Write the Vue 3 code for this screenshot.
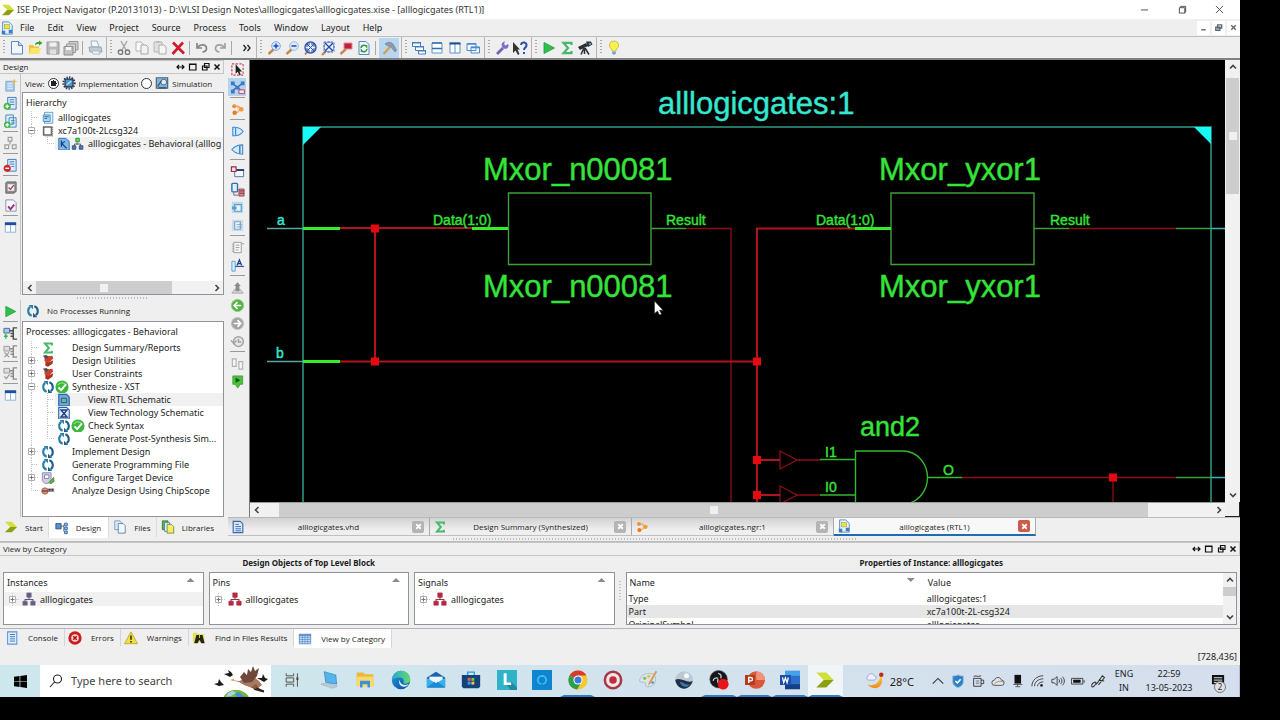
<script setup>
import { ref } from 'vue'

const view = ref('implementation')
const query = ref('')

const menus = ['File', 'Edit', 'View', 'Project', 'Source', 'Process', 'Tools', 'Window', 'Layout', 'Help']

const toolGroups = [
  ['new', 'open', 'save', 'saveall', '|', 'print'],
  ['cut', 'copy', 'paste', 'delete', '|', 'undo', 'redo', '|', 'more'],
  ['zoomin', 'zoomout', 'zoomfit', 'zoomsel', 'zoomred', 'refresh', '|', 'hammer'],
  ['cascade', 'tileh', 'tilev', 'windows'],
  ['wrench', 'whats'],
  ['play', 'sigma', 'scope'],
  ['bulb'],
]

const designTools = ['newsrc', 'addsrc', 'addcopy', '|', 'boxes', '|', 'removesrc', '|', 'chipcheck', 'pagecheck', '|', 'columns']
const processTools = ['play', '|', 'runproc', 'runprocx', '|', 'runprocv', '|', 'columns']
const schematicTools = [
  'select', 'nets', '|', 'orange', '|', 'gateR', 'gateL', '|', 'winred', 'chipred', 'bluein', 'blueout',
  '|', 'netlist', 'labelA', '|', 'up', 'back', 'forward', 'history', '|', 'pair', 'marker',
]

const hierarchy = [
  { line: ['tee'], icon: 'project', text: 'alllogicgates' },
  { line: ['minus'], icon: 'chip', text: 'xc7a100t-2Lcsg324' },
  { line: ['blank', 'elbow'], icon: 'vhd', extra: 'blocks', text: 'alllogicgates - Behavioral (alllog', sel: true },
]

const processes = [
  { line: ['tee'], icon: 'sigma', text: 'Design Summary/Reports' },
  { line: ['plus'], icon: 'tools', text: 'Design Utilities' },
  { line: ['plus'], icon: 'tools', text: 'User Constraints' },
  { line: ['minus'], icon: 'cycle', extra: 'ok', text: 'Synthesize - XST' },
  { line: ['bar', 'tee'], icon: 'rtl', text: 'View RTL Schematic', sel: true },
  { line: ['bar', 'tee'], icon: 'tech', text: 'View Technology Schematic' },
  { line: ['bar', 'tee'], icon: 'cycle', extra: 'ok', text: 'Check Syntax' },
  { line: ['bar', 'elbow'], icon: 'cycle', text: 'Generate Post-Synthesis Sim...' },
  { line: ['plus'], icon: 'cycle', text: 'Implement Design' },
  { line: ['tee'], icon: 'cycle', text: 'Generate Programming File' },
  { line: ['plus'], icon: 'config', text: 'Configure Target Device' },
  { line: ['elbow'], icon: 'chipscope', text: 'Analyze Design Using ChipScope' },
]

const dockTabs = [
  { icon: 'logo', text: 'Start' },
  { icon: 'design', text: 'Design', on: true },
  { icon: 'files', text: 'Files' },
  { icon: 'libs', text: 'Libraries' },
]

const docTabs = [
  { icon: 'doc', text: 'alllogicgates.vhd' },
  { icon: 'sigma', text: 'Design Summary (Synthesized)' },
  { icon: 'orange', text: 'alllogicgates.ngr:1' },
  { icon: 'rtldoc', text: 'alllogicgates (RTL1)', on: true },
]

const objectLists = [
  { title: 'Instances', icon: 'orgblue', sel: true },
  { title: 'Pins', icon: 'orgred' },
  { title: 'Signals', icon: 'orgred' },
]

const properties = [
  ['Type', 'alllogicgates:1'],
  ['Part', 'xc7a100t-2L-csg324'],
  ['OriginalSymbol', 'alllogicgates'],
]

const panelTabs = [
  { icon: 'console', text: 'Console' },
  { icon: 'error', text: 'Errors' },
  { icon: 'warning', text: 'Warnings' },
  { icon: 'find', text: 'Find in Files Results' },
  { icon: 'grid', text: 'View by Category', on: true },
]

const taskApps = [
  { n: 'taskview' }, { n: 'pc' }, { n: 'folder' }, { n: 'edge' }, { n: 'mail' }, { n: 'store' }, { n: 'appL' }, { n: 'appO' },
  { n: 'chrome', run: true }, { n: 'record' }, { n: 'paint' }, { n: 'globe' }, { n: 'obs', run: true },
  { n: 'ppt', run: true }, { n: 'word', run: true }, { n: 'logo', run: true, on: true },
]

const trayIcons = ['chevup', 'shield', 'cup', 'cloud', 'usb', 'wifi', 'volume', 'battery', 'pen']
</script>

<template>
  <svg class="sprite" aria-hidden="true">
    <defs>
      <linearGradient id="gEdge" x1="0" y1="0" x2="1" y2="1"><stop offset="0" stop-color="#1b9de2" /><stop offset="1" stop-color="#0c4a9a" /></linearGradient>
      <linearGradient id="gEdge2" x1="0" y1="0" x2="1" y2="0"><stop offset="0" stop-color="#2aa7d8" /><stop offset="1" stop-color="#5fdc6a" /></linearGradient>
      <linearGradient id="gMoon" x1="0" y1="0" x2="0" y2="1"><stop offset="0" stop-color="#ffc93a" /><stop offset="1" stop-color="#f08a1c" /></linearGradient>
    </defs>
    <symbol id="logo" viewBox="0 0 16 16"><path d="M1 2h8l6 6H7z" fill="#cfe03a" /><path d="M7 8h8l-6 6H1z" fill="#8f9f14" /></symbol>
    <symbol id="rtldoc" viewBox="0 0 16 16"><path d="M3 1h7l4 4v10H3z" fill="#e6f1fb" stroke="#4a86c0" /><rect x="5" y="4" width="6" height="5" fill="#f3e03c" stroke="#8aa04a" stroke-width=".6" /><path d="M2 11h4v4H2z M10 10h4v4h-4z" fill="#3c7ec4" /></symbol>
    <symbol id="new" viewBox="0 0 16 16"><path d="M2.500 1.500h7l4 4V14h-11z" fill="#f1f6ff" stroke="#5b86c9" /><path d="M9.500 1.500v4h4" fill="#bcd4f4" stroke="#5b86c9" /></symbol>
    <symbol id="open" viewBox="0 0 16 16"><path d="M2 5h4l1 1.500h5V14H2z" fill="#e9c33c" /><path d="M4 8h10l-2 6H2z" fill="#fbe36d" /><path d="M8 5c0-2.500 2-3 4-3V.5L15.500 3 12 5.500V4C10 4 9 4.500 8 5z" fill="#2ea52e" /></symbol>
    <symbol id="save" viewBox="0 0 16 16"><path d="M2 2h12v12H2z" fill="#b9b9b9" stroke="#999" /><path d="M4.500 2.500h7v4h-7z" fill="#f2f2f2" /><path d="M5 9.500h6V14H5z" fill="#dedede" /></symbol>
    <symbol id="saveall" viewBox="0 0 16 16"><path d="M6 1.500h9V10H6z" fill="#ccc" stroke="#999" /><path d="M3.500 4h9v8.500h-9z" fill="#d5d5d5" stroke="#999" /><path d="M1 6.500h9V15H1z" fill="#c2c2c2" stroke="#8d8d8d" /><path d="M3 7h5v3H3z" fill="#f4f4f4" /></symbol>
    <symbol id="print" viewBox="0 0 16 16"><path d="M4 1h6l2 6H5z" fill="#f5f7fa" stroke="#a5b2c0" /><path d="M2 7h12l1 5H3z" fill="#c3ccd6" stroke="#98a4b0" /><path d="M5 11h7l1 3H6z" fill="#eef" stroke="#a8b2bd" stroke-width=".8" /></symbol>
    <symbol id="cut" viewBox="0 0 16 16"><path d="M5 1l5 9M11 1l-5 9" stroke="#a8a8a8" stroke-width="1.500" /><circle cx="4.500" cy="12.200" r="2.200" fill="none" stroke="#777" stroke-width="1.300" /><circle cx="11.500" cy="12.200" r="2.200" fill="none" stroke="#777" stroke-width="1.300" /></symbol>
    <symbol id="copy" viewBox="0 0 16 16"><path d="M2 2h5l2 2v7H2z" fill="#fafafa" stroke="#b4b4b4" /><path d="M7 5h5l2 2v7H7z" fill="#f2f2f2" stroke="#a5a5a5" /></symbol>
    <symbol id="paste" viewBox="0 0 16 16"><path d="M2 2h8v10H2z" fill="#dfdfdf" stroke="#b8b8b8" /><path d="M4.500 1h3v2h-3z" fill="#bbb" /><path d="M7 5h5l2 2v7H7z" fill="#f6f6f6" stroke="#adadad" /></symbol>
    <symbol id="delete" viewBox="0 0 16 16"><path d="M3 2.500l11 11M13 2.500L2.500 14" stroke="#d3182c" stroke-width="2.600" /></symbol>
    <symbol id="undo" viewBox="0 0 16 16"><path d="M3 3v5h5M3.500 7.500C6 4 12 4 12.500 8c.2 2.500-1.500 4-4 4" fill="none" stroke="#858585" stroke-width="1.700" /></symbol>
    <symbol id="redo" viewBox="0 0 16 16"><path d="M13 3v5H8M12.500 7.500C10 4 4 4 3.500 8c-.2 2.500 1.500 4 4 4" fill="none" stroke="#a0a0a0" stroke-width="1.700" /></symbol>
    <symbol id="more" viewBox="0 0 16 16"><path d="M7.500 5l2.500 3-2.500 3M11.500 5l2.500 3-2.500 3" fill="none" stroke="#222" stroke-width="1.300" /></symbol>
    <symbol id="zoomin" viewBox="0 0 16 16"><path d="M8 9l-5.500 5" stroke="#c58a4a" stroke-width="2.400" /><circle cx="10" cy="6" r="4.300" fill="#dcecff" stroke="#7aa3dc" /><path d="M10 3.500v5M7.500 6h5" stroke="#1b49b8" stroke-width="1.500" /></symbol>
    <symbol id="zoomout" viewBox="0 0 16 16"><path d="M8 9l-5.500 5" stroke="#c58a4a" stroke-width="2.400" /><circle cx="10" cy="6" r="4.300" fill="#dcecff" stroke="#9ab9e4" /><path d="M7.500 6h5" stroke="#1b49b8" stroke-width="1.500" /></symbol>
    <symbol id="zoomfit" viewBox="0 0 16 16"><path d="M6 11l-3 3.500" stroke="#c58a4a" stroke-width="2" /><circle cx="8.500" cy="7.500" r="5.500" fill="#eaf2ff" stroke="#2c57b5" stroke-width="1.400" /><path d="M5.500 4.500l6 6M11.500 4.500l-6 6M5 7V4h3M9 11h3V8M9 4h3v3M5 8v3h3" fill="none" stroke="#2448a0" /></symbol>
    <symbol id="zoomsel" viewBox="0 0 16 16"><path d="M6 11l-4 4" stroke="#c58a4a" stroke-width="2.400" /><circle cx="9" cy="7" r="5" fill="#eaf2ff" stroke="#5a83cf" /><path d="M5 3l8 8M13 3l-8 8" stroke="#2448a0" stroke-width="1.300" /><path d="M4 2h10v10H4z" fill="none" stroke="#4a6fc0" stroke-dasharray="2 1.500" /></symbol>
    <symbol id="zoomred" viewBox="0 0 16 16"><path d="M8 9l-5.500 5" stroke="#c58a4a" stroke-width="2.400" /><path d="M6 3h8v6H6z" fill="#c0203c" stroke="#e08c98" /></symbol>
    <symbol id="refresh" viewBox="0 0 16 16"><path d="M3 1.500h7l3 3v10H3z" fill="#f3faff" stroke="#5b86c9" /><path d="M5 8c.3-3 4-3.500 5.500-1.500V5M11 9c-.3 3-4 3.500-5.500 1.500V12" fill="none" stroke="#2f9e3f" stroke-width="1.600" /></symbol>
    <symbol id="hammer" viewBox="0 0 16 16"><path d="M9 7l-6.500 7" stroke="#d9a04f" stroke-width="2.400" /><path d="M4 4c3-2.500 6-2 8 0l3.500 6-1.500 2-4-5-3-1z" fill="#8f99aa" stroke="#6d7787" stroke-width=".6" /></symbol>
    <symbol id="cascade" viewBox="0 0 16 16"><g fill="#fff" stroke="#3f7fbe"><path d="M1.500 2.500h8v4h-8zM4.500 6.500h8v4h-8zM7.500 10.500h7v3.500h-7z" /></g><path d="M1 2h9v1.500H1zM4 6h9v1.500H4zM7 10h8v1.500H7z" fill="#3f7fbe" /></symbol>
    <symbol id="tileh" viewBox="0 0 16 16"><path d="M3 3h10v10H3z" fill="#fff" stroke="#5a93c8" /><path d="M3 3h10M3 8.500h10" stroke="#2f6fae" stroke-width="1.600" /></symbol>
    <symbol id="tilev" viewBox="0 0 16 16"><path d="M3 3h10v10H3zM8 3v10" fill="#fff" stroke="#5a93c8" /><path d="M2.500 3.500h11" stroke="#1f4f94" stroke-width="2" /></symbol>
    <symbol id="windows" viewBox="0 0 16 16"><path d="M2 3.500h9v7H2zM6 7h8.500v6H6z" fill="#f4faff" stroke="#4a8ccc" /><path d="M2 4h9M6 7.500h8.500" stroke="#4a8ccc" stroke-width="1.500" /></symbol>
    <symbol id="wrench" viewBox="0 0 16 16"><path d="M3 14l6-6" stroke="#6d66b8" stroke-width="2.800" /><path d="M14 4l-2.500 1.500L10 4l1-2.500C8.500 1.500 7 4 8 6.500s4 3 5.500 1.500S14.500 5 14 4z" fill="#7a72c6" /></symbol>
    <symbol id="whats" viewBox="0 0 16 16"><path d="M1 2v11l2.500-2.500L6 15l1.500-1L5.500 9.500H8z" fill="#333" /><path d="M9 5c.5-4 6-3 5.500.5-.3 2-2.500 2-2.500 4.500M12 12v2" fill="none" stroke="#2d4fa8" stroke-width="2" /></symbol>
    <symbol id="play" viewBox="0 0 16 16"><path d="M3 2.500L13.500 8 3 13.500z" fill="#2fc04c" stroke="#1f9a38" stroke-width=".8" /></symbol>
    <symbol id="sigma" viewBox="0 0 16 16"><path d="M12.500 5V2.800H4.500L9 8l-4.500 5.200h8V11" fill="none" stroke="#46b96a" stroke-width="2.200" /></symbol>
    <symbol id="scope" viewBox="0 0 16 16"><path d="M1 7l8-4 2 3-8 4z M9 1.500l5 0 1.500 3L11 7z" fill="#2b2f38" /><path d="M7 8l-3 6.500M7.500 8v6M8 8l4 6.500" stroke="#2b2f38" stroke-width="1.500" /><circle cx="13" cy="4" r="1.300" fill="#5a95b8" /></symbol>
    <symbol id="bulb" viewBox="0 0 16 16"><path d="M8 1a4.300 4.300 0 0 1 2.500 8L10 11H6l-.5-2A4.300 4.300 0 0 1 8 1z" fill="#f8ee55" stroke="#c9bb35" stroke-width=".8" /><path d="M6 11.500h4v2L8 15l-2-1.500z" fill="#7ba8cc" /></symbol>
    <symbol id="newsrc" viewBox="0 0 16 16"><path d="M3 3.500h9V14H3z" fill="#a8ccec" stroke="#7fa9d2" /><path d="M5 6h5M5 8.500h5M5 11h5" stroke="#e8f3fc" /><path d="M12 .5l1 2.300 2.500.7-2.500 1-1 2.500-1-2.500-2-1 2-.7z" fill="#f2b84b" /></symbol>
    <symbol id="addsrc" viewBox="0 0 16 16"><path d="M5 1.500h9V14H5z" fill="#dcecfb" stroke="#3f7cb8" /><path d="M7 4h5M7 6.500h5M7 9h5" stroke="#3f7cb8" /><circle cx="4.500" cy="11" r="3.800" fill="#43b649" /><path d="M4.500 9v4M2.500 11h4" stroke="#fff" stroke-width="1.400" /></symbol>
    <symbol id="addcopy" viewBox="0 0 16 16"><path d="M3 1h8v10H3zM6.500 4H14v10H6.500z" fill="#dcecfb" stroke="#3f8cb8" /><path d="M8.500 7h4M8.500 9.500h4" stroke="#3f8cb8" /><circle cx="4.500" cy="11.500" r="3.500" fill="#43b649" /><path d="M4.500 9.500v4M2.500 11.500h4" stroke="#fff" stroke-width="1.300" /></symbol>
    <symbol id="boxes" viewBox="0 0 16 16"><path d="M5.500 1.500h4v4h-4zM2 9.500h4v4H2zM10 9.500h4v4h-4zM7.500 6v3" fill="#eee" stroke="#a0a0a0" stroke-width="1.300" /></symbol>
    <symbol id="removesrc" viewBox="0 0 16 16"><path d="M5 1.500h9V14H5z" fill="#dcecfb" stroke="#3f7cb8" /><path d="M7 4h5M7 6.500h5M9 9h3" stroke="#3f7cb8" /><circle cx="4.500" cy="11" r="3.800" fill="#d3252c" /><path d="M2.500 11h4" stroke="#fff" stroke-width="1.500" /></symbol>
    <symbol id="chipcheck" viewBox="0 0 16 16"><path d="M4 2h10v10l-2 2H3V3z" fill="#8c8c8c" stroke="#666" /><path d="M5 4.500h7v7H5z" fill="#f1f1f1" /><path d="M6 8l2 2 3.500-4.500" fill="none" stroke="#a4384a" stroke-width="1.400" /></symbol>
    <symbol id="pagecheck" viewBox="0 0 16 16"><path d="M3 2h8l3 3v9H3z" fill="#f6f6ff" stroke="#8a8fa8" /><path d="M5.500 9l2.500 3 4-5" fill="none" stroke="#9a2f7c" stroke-width="2" /></symbol>
    <symbol id="columns" viewBox="0 0 16 16"><path d="M2.500 3h11v10h-11zM8 5v8" fill="#fff" stroke="#8ab0da" /><path d="M2 2.500h12v3H2z" fill="#1d4d9e" /></symbol>
    <symbol id="runproc" viewBox="0 0 16 16"><path d="M1 2.500h6v5H1z" fill="#a8c8ea" stroke="#47688e" /><path d="M15 2h-4v12h4M7 5h4M11 8H8M11 11H8" fill="none" stroke="#4b4b4b" stroke-width="1.500" /><path d="M3 8.500v5M1 11h4" stroke="#37b34a" stroke-width="1.500" /></symbol>
    <symbol id="runprocx" viewBox="0 0 16 16"><path d="M1 2.500h6v5H1z" fill="#ddd" stroke="#999" /><path d="M15 2h-4v12h4M7 5h4M11 8H8M11 11H8" fill="none" stroke="#8c8c8c" stroke-width="1.500" /><path d="M1.500 9l5 5M6.500 9l-5 5" stroke="#999" stroke-width="1.300" /></symbol>
    <symbol id="runprocv" viewBox="0 0 16 16"><path d="M1 2.500h6v5H1z" fill="#ddd" stroke="#999" /><path d="M15 2h-4v12h4M7 5h4M11 8H8M11 11H8" fill="none" stroke="#8c8c8c" stroke-width="1.500" /><path d="M1.500 11l2 2.500L7 9" fill="none" stroke="#999" stroke-width="1.300" /></symbol>
    <symbol id="select" viewBox="0 0 16 16"><path d="M2 2h12v12H2z" fill="none" stroke="#d04a5c" stroke-width="1.300" stroke-dasharray="2.500 1.500" /><path d="M6 2.500v10l2.300-2L10 14l1.500-.8L10 10h3z" fill="#222" /></symbol>
    <symbol id="nets" viewBox="0 0 16 16"><path d="M3 4l10 8M13 4L3 11" stroke="#2c62ae" stroke-width="1.300" /><path d="M1 1.500h4v4H1zM11.500 1.500h4v4h-4zM6 6h4v4H6zM1 10.500h4v4H1z" fill="#3f78c4" /><path d="M9.500 10.500h6v4h-6z" fill="#f7dfe8" stroke="#c03c70" /></symbol>
    <symbol id="orange" viewBox="0 0 16 16"><path d="M5 4.500h3l3 2M5 11h3l3-3.500" fill="none" stroke="#eeb070" stroke-width="1.400" /><circle cx="4.500" cy="4.500" r="2.200" fill="#ee8e32" /><circle cx="5" cy="11.500" r="2.400" fill="#e87c20" /><circle cx="9" cy="5.500" r="1.500" fill="#f2b070" /><circle cx="12" cy="7.800" r="2.500" fill="#f09a44" /></symbol>
    <symbol id="gateR" viewBox="0 0 16 16"><path d="M3 3.500c6-.5 9 1.500 11 4.500-2 3-5 5-11 4.500z" fill="#d2ebfb" stroke="#3f8cd0" stroke-width="1.200" /><path d="M6 4v8" stroke="#3f8cd0" stroke-width="1.300" /></symbol>
    <symbol id="gateL" viewBox="0 0 16 16"><path d="M13.500 3c-6 0-9 2-11.500 5 2.500 3 5.500 5 11.500 5z" fill="#d2ebfb" stroke="#3f8cd0" stroke-width="1.200" /><path d="M10.500 4v8.500" stroke="#2c5fae" stroke-width="1.300" /></symbol>
    <symbol id="winred" viewBox="0 0 16 16"><path d="M5 6h9.500v7.500H5z" fill="#f4f9ff" stroke="#4a74a8" /><path d="M5 6.500h10" stroke="#1e3d7a" stroke-width="2" /><path d="M1.500 3h5v5h-5z" fill="#f3dde4" stroke="#a02848" stroke-width="1.200" /></symbol>
    <symbol id="chipred" viewBox="0 0 16 16"><rect x="2" y="1.500" width="6" height="9" rx="1" fill="#e1f0fc" stroke="#2f6cb4" stroke-width="1.500" /><path d="M9.500 7.500h5.500v7.500H9.500z" fill="#d88898" stroke="#9a4a58" /><path d="M10 9.500h5M10 12h5" stroke="#7a3040" /><path d="M4 11v3h5" fill="none" stroke="#666" /></symbol>
    <symbol id="bluein" viewBox="0 0 16 16"><path d="M2 2h12v12H2z" fill="#b5d9f0" /><path d="M5 5h7v7H5z" fill="#e7f4fc" stroke="#5d9bc9" stroke-width="1.300" /><path d="M2 7h5v3H2z" fill="#5d9bc9" /></symbol>
    <symbol id="blueout" viewBox="0 0 16 16"><path d="M2 2h12v12H2z" fill="#c6ddee" /><path d="M5 4h6v8H5z" fill="#eef6fc" stroke="#7da6c9" stroke-width="1.300" /><path d="M7 7h6M7 9.500h6" stroke="#7da6c9" /></symbol>
    <symbol id="netlist" viewBox="0 0 16 16"><path d="M4 2.500h8v11H4z" fill="#f7f7f7" stroke="#9a9a9a" /><path d="M2 4.500h2M2 7h2M2 9.500h2M2 12h2M12 4h3M6 5.500h4M6 8h4M6 10.500h3" stroke="#a0a0a0" /></symbol>
    <symbol id="labelA" viewBox="0 0 16 16"><path d="M2 3.500h3.500V14H2z" fill="#d7effc" stroke="#5e9fd0" /><path d="M5.500 9H15" stroke="#2b5ea6" stroke-width="1.300" /><path d="M7.500 8L10 2l2.500 6M8.500 6h3" fill="none" stroke="#23408a" stroke-width="1.400" /></symbol>
    <symbol id="up" viewBox="0 0 16 16"><path d="M2 14l3-4h6l3 4z" fill="#d5d5d5" stroke="#aaa" /><path d="M8 2.500l3.500 4H10V12H6V6.500H4.500z" fill="#8b8b8b" /></symbol>
    <symbol id="back" viewBox="0 0 16 16"><circle cx="8" cy="8" r="6.500" fill="#52b543" stroke="#8fc985" /><path d="M12 8H5M8 4.500L4.500 8 8 11.500" fill="none" stroke="#fff" stroke-width="1.800" /></symbol>
    <symbol id="forward" viewBox="0 0 16 16"><circle cx="8" cy="8" r="6.500" fill="#a3a3a3" stroke="#c2c2c2" /><path d="M4 8h7M8 4.500L11.500 8 8 11.500" fill="none" stroke="#fff" stroke-width="1.800" /></symbol>
    <symbol id="history" viewBox="0 0 16 16"><circle cx="9" cy="8" r="5.200" fill="#e6e6e6" stroke="#a5a5a5" stroke-width="1.600" /><path d="M9 5v3.500h3M1 7l3 3 3-3" fill="none" stroke="#a0a0a0" stroke-width="1.500" /></symbol>
    <symbol id="pair" viewBox="0 0 16 16"><path d="M2.500 3h4v8h-4zM9.500 6h4v8h-4z" fill="#f6f6f6" stroke="#b0b0b0" stroke-width="1.200" /></symbol>
    <symbol id="marker" viewBox="0 0 16 16"><path d="M3 2h10.500v9H11l-2.800 4-2.700-4H3z" fill="#4cc03c" stroke="#35982a" stroke-width=".8" /><path d="M6 4l5 2.700L6 9.300z" fill="#124c10" /></symbol>
    <symbol id="project" viewBox="0 0 16 16"><path d="M4 1.500h9.500V14H4z" fill="#e0f1fb" stroke="#5c9cc9" /><path d="M2.500 4.500h8V12h-8z" fill="#a9d5f0" stroke="#4f8fc2" /><path d="M4 6.500h5M4 8.500h3" stroke="#285f98" /></symbol>
    <symbol id="chip" viewBox="0 0 16 16"><path d="M3 3.500h9v9H3z" fill="#fff" stroke="#666" stroke-width="1.800" /><path d="M13 3v10.500H4" fill="none" stroke="#8a8a8a" stroke-width="1.800" stroke-dasharray="1.500 1" /></symbol>
    <symbol id="vhd" viewBox="0 0 16 16"><path d="M2 1.500h8L14 5v10H2z" fill="#7fb7e6" stroke="#2e6fae" /><path d="M5 4v7M5 8l4-3M6 8l5 5" stroke="#163f7c" stroke-width="1.400" /></symbol>
    <symbol id="blocks" viewBox="0 0 16 16"><path d="M7 6v3M4 10V8h7v2" fill="none" stroke="#555" /><path d="M5.500 1.500h4v4h-4z" fill="#5ed35e" stroke="#2b8c3a" /><path d="M1.500 10h4v4h-4zM9.500 10h4v4h-4z" fill="#4f78b4" stroke="#2b4c84" /></symbol>
    <symbol id="tools" viewBox="0 0 16 16"><path d="M4 3l9-1 1 3-4 4-3 2-3-3z" fill="#c8442f" /><path d="M2 2l4-1 3 2-3 3z" fill="#4e4e50" /><path d="M5 9l3 1 6-3-1 4-5 3.500-3-1z" fill="#a8321f" /></symbol>
    <symbol id="cycle" viewBox="0 0 16 16"><path d="M6.500 13.500C1.500 12 1.500 5 5 3.500" fill="none" stroke="#2b7fa8" stroke-width="2.400" /><path d="M3 1h5v5z" fill="#2b7fa8" /><path d="M9.500 2.500C14.500 4 14.500 11 11 12.500" fill="none" stroke="#1d5f8c" stroke-width="2.400" /><path d="M13 15H8v-5z" fill="#1d5f8c" /></symbol>
    <symbol id="ok" viewBox="0 0 16 16"><circle cx="8" cy="8" r="7.500" fill="#3bb83c" /><path d="M3 6a6 6 0 0 1 10 0" fill="none" stroke="#8fe07c" stroke-width="1.500" /><path d="M4 8.500l3 3L12.500 5" fill="none" stroke="#fff" stroke-width="2.200" /></symbol>
    <symbol id="rtl" viewBox="0 0 16 16"><path d="M2 1.500h9l3 3V15H2z" fill="#6fa8dc" stroke="#2e62a6" stroke-width="1.300" /><path d="M5 6h6v5H5z" fill="#76b48a" stroke="#28518a" /></symbol>
    <symbol id="tech" viewBox="0 0 16 16"><path d="M2 1.500h9l3 3V15H2z" fill="#dfeefb" stroke="#2e62a6" stroke-width="1.300" /><path d="M4.500 4.500h7L8 8.500l3.500 4h-7L8 8.500z" fill="none" stroke="#1d3f84" stroke-width="1.600" /></symbol>
    <symbol id="config" viewBox="0 0 16 16"><path d="M1.500 2h10v8l-3 4H4l-2.500-3z" fill="#cfcde4" stroke="#8b88a8" /><path d="M4 4.500h5v4H4z" fill="#fff" stroke="#7a7aa0" /><path d="M9 13l5.500-6 .5 5-4 3z" fill="#5fae4a" stroke="#3c7c30" stroke-width=".7" /></symbol>
    <symbol id="chipscope" viewBox="0 0 16 16"><circle cx="4.500" cy="8" r="3.600" fill="#dd8f78" stroke="#a05a48" /><path d="M1 8h14M8 6h7M10 5v3M13 5v3" stroke="#4a3030" stroke-width="1.200" /></symbol>
    <symbol id="design" viewBox="0 0 16 16"><path d="M1 3h6v6H1z" fill="#5a8fd0" stroke="#28528e" /><path d="M7 6h3M10 4v8" stroke="#666" /><path d="M11 2.500h3v3h-3zM11 7h3v3h-3zM11 11.500h3v3h-3z" fill="#9cc4ec" stroke="#2e5c98" /></symbol>
    <symbol id="files" viewBox="0 0 16 16"><path d="M2 1h6l2 2v8H2z" fill="#dbe9fa" stroke="#7a95bc" /><path d="M6 4h5.500L14 6.500V15H6z" fill="#f2f8ff" stroke="#5c7fb0" /></symbol>
    <symbol id="libs" viewBox="0 0 16 16"><path d="M1.500 1H8v10H1.500z" fill="#55b84e" stroke="#2f7c30" /><path d="M4 3h6v10H4z" fill="#dbe9fa" stroke="#5c7fb0" /><path d="M7 5h5l2.500 2.500V15H7z" fill="#f5ee64" stroke="#6c8f50" /></symbol>
    <symbol id="doc" viewBox="0 0 16 16"><path d="M2.500 1.500h8l3 3v10h-11z" fill="#d9e8fb" stroke="#3767b0" stroke-width="1.300" /><path d="M5 5h4M5 7.500h6.500M5 10h6.500M5 12.300h6.500" stroke="#3767b0" /></symbol>
    <symbol id="orgblue" viewBox="0 0 16 16"><path d="M8 5v4M3.500 11V8.500h9V11" fill="none" stroke="#5a5c78" stroke-width="1.200" /><path d="M5.500 1h5v5h-5zM1 10.500h5v4.500H1zM10 10.500h5v4.500h-5z" fill="#565f94" stroke="#8f6a7c" stroke-width=".8" /></symbol>
    <symbol id="orgred" viewBox="0 0 16 16"><path d="M8 5v4M3.500 11V8.500h9V11" fill="none" stroke="#8a3a48" stroke-width="1.200" /><path d="M5.500 1h5v5h-5zM1 10.500h5v4.500H1zM10 10.500h5v4.500h-5z" fill="#c82238" stroke="#98304a" stroke-width=".8" /></symbol>
    <symbol id="console" viewBox="0 0 16 16"><path d="M3 1h10.500v14H3z" fill="#e3f0fd" stroke="#5d93d0" stroke-width="1.200" /><path d="M5.500 4h6M5.500 6.500h6M5.500 9h6M5.500 11.500h6" stroke="#2f6ab8" /></symbol>
    <symbol id="error" viewBox="0 0 16 16"><circle cx="8" cy="8" r="7.600" fill="#cc1c1c" /><circle cx="8" cy="8" r="4.300" fill="#f4d8d8" /><path d="M6 6l4 4M10 6l-4 4" stroke="#b01010" stroke-width="1.800" /></symbol>
    <symbol id="warning" viewBox="0 0 16 16"><path d="M8 1l7.500 13.500H.5z" fill="#f4e03a" stroke="#a89a20" stroke-width=".8" /><path d="M8 5v5M8 11.500v1.700" stroke="#222" stroke-width="1.700" /></symbol>
    <symbol id="find" viewBox="0 0 16 16"><path d="M1 2h5l1 1.500h7V13H1z" fill="#e8e25a" /><path d="M5 4.500h3V8h1V4.500h3l2.500 9.500h-4L9 10.500H8L6.500 14h-4z" fill="#262618" /></symbol>
    <symbol id="grid" viewBox="0 0 16 16"><path d="M1.500 2.500h13v11h-13z" fill="#cfe2f7" stroke="#5f8fcc" /><path d="M1.500 6h13M1.500 8.500h13M1.500 11h13M5 3v10.500M8 3v10.500M11.200 3v10.500" stroke="#5f8fcc" stroke-width=".9" /><path d="M1 2.500h14v2H1z" fill="#5f8fcc" /></symbol>
    <symbol id="impl" viewBox="0 0 16 16"><circle cx="8" cy="8" r="6.300" fill="none" stroke="#27374d" stroke-width="2.600" stroke-dasharray="1.500 1.400" /><path d="M3.500 3.500h9v9h-9z" fill="#4f95cf" stroke="#27374d" stroke-width="1.300" /><path d="M5.500 10l5-4" stroke="#c5e3f7" stroke-width="1.500" /></symbol>
    <symbol id="simu" viewBox="0 0 16 16"><path d="M1.500 2h13v12h-13z" fill="#7eb4e0" stroke="#4d5f74" stroke-width="1.300" /><circle cx="10" cy="7" r="3.300" fill="#dcecf8" stroke="#44586e" /><path d="M3 12l4-6M4 13.500h9" stroke="#35485e" stroke-width="1.300" /></symbol>

    <symbol id="c-tee" viewBox="0 0 16 13"><path d="M8.500 0v13M9 6.500h6" fill="none" stroke="#c4c4c4" stroke-dasharray="1 1" /></symbol>
    <symbol id="c-elbow" viewBox="0 0 16 13"><path d="M8.500 0v6.500h7" fill="none" stroke="#c4c4c4" stroke-dasharray="1 1" /></symbol>
    <symbol id="c-bar" viewBox="0 0 16 13"><path d="M8.500 0v13" stroke="#c4c4c4" stroke-dasharray="1 1" /></symbol>
    <symbol id="c-blank" viewBox="0 0 16 13" />
    <symbol id="c-plus" viewBox="0 0 16 13"><path d="M8.500 0v13M12 6.500h4" stroke="#c4c4c4" stroke-dasharray="1 1" /><path d="M5.500 3.500h6v6h-6z" fill="#fff" stroke="#b0b0b0" /><path d="M6.500 6.500h4M8.500 4.500v4" stroke="#777" /></symbol>
    <symbol id="c-minus" viewBox="0 0 16 13"><path d="M8.500 0v13M12 6.500h4" stroke="#c4c4c4" stroke-dasharray="1 1" /><path d="M5.500 3.500h6v6h-6z" fill="#fff" stroke="#b0b0b0" /><path d="M6.500 6.500h4" stroke="#777" /></symbol>

    <symbol id="w-dock" viewBox="0 0 48 12"><g fill="none" stroke="#111" stroke-width="1.200"><path d="M2 6h7M4 4L2 6l2 2M7 4l2 2-2 2" /><path d="M14.500 3h6.500v6h-6.500zM14.500 3.500h6.500" /><path d="M29.500 2.500h4.500v4h-4.500zM27.500 5h4.500v4h-4.500z" fill="#efefef" /><path d="M39.500 3.500l5 5M44.500 3.500l-5 5" stroke-width="1.500" /></g></symbol>

    <symbol id="taskview" viewBox="0 0 24 24"><g fill="none" stroke="#555" stroke-width="1.200"><path d="M5 4v3h9V4M5 20v-3h9v3M5 9.500h9v5H5z" /><path d="M18.500 4v16" /></g><path d="M17.300 9h2.400v3h-2.400z" fill="#444" /></symbol>
    <symbol id="pc" viewBox="0 0 24 24"><path d="M5 2l14 4 1 11-13-2z" fill="#55b4ea" stroke="#2e80c0" stroke-width=".8" /><path d="M1 17l6-1.500 14 4-6 2.500z" fill="#b9cbd8" stroke="#93a9ba" stroke-width=".6" /></symbol>
    <symbol id="folder" viewBox="0 0 24 24"><path d="M2 3h8l2 2h10v14H2z" fill="#e9b93a" /><path d="M2 8h20v12H2z" fill="#fbd86b" /><path d="M6 13h12v8h-3v-4H9v4H6z" fill="#3d8fd8" /></symbol>
    <symbol id="edge" viewBox="0 0 24 24"><circle cx="12" cy="12" r="11" fill="url(#gEdge)" /><path d="M1 12C2 5 7 1 12 1s11 4 11 10c0 4-3 5.500-6 5.500-2 0-2.500-1-2-2 1-2-.5-5.500-4.500-5.500C6.500 9 3 10.500 1 12z" fill="url(#gEdge2)" /><path d="M10.500 11.500c-.5 4.500 4 7.500 9 6l2-1c-1.500 3-4.500 4-7 3.500-4-.5-6-5-4-8.500z" fill="#d8eef4" /></symbol>
    <symbol id="mail" viewBox="0 0 24 24"><path d="M1 9l11-7 11 7v12H1z" fill="#1b64b4" /><path d="M4 8h16v8H4z" fill="#eef6fd" /><path d="M1 9.500l11 6.500 11-6.500V21H1z" fill="#37b3ec" /><path d="M1 21l9-7 2 2 2-2 9 7z" fill="#1f8ad4" /></symbol>
    <symbol id="store" viewBox="0 0 24 24"><path d="M8 6V2.500h8V6" fill="none" stroke="#2a9ed8" stroke-width="1.600" /><path d="M1 6h22v14l-2 2H3l-2-2z" fill="#15427a" /><path d="M8 9.500h3.500V13H8z" fill="#f2603c" /><path d="M12.500 9.500H16V13h-3.500z" fill="#7fc24a" /><path d="M8 14h3.500v3.500H8z" fill="#36a3e8" /><path d="M12.500 14H16v3.500h-3.500z" fill="#f8c43c" /></symbol>
    <symbol id="appL" viewBox="0 0 24 24"><path d="M0 0h24v24H0z" fill="#2fb3c8" /><path d="M12 18l5-4 7 7v3H16z" fill="#1f8b9f" /><path d="M8 4h3.500v11H17v3H8z" fill="#fff" /></symbol>
    <symbol id="appO" viewBox="0 0 24 24"><path d="M0 0h24v24H0z" fill="#1184cf" /><circle cx="12" cy="12" r="5" fill="none" stroke="#37c6f4" stroke-width="2" /><path d="M11 16h2v2h-2z" fill="#1184cf" /></symbol>
    <symbol id="chrome" viewBox="0 0 24 24"><circle cx="12" cy="12" r="11.500" fill="#f7c92c" /><path d="M12 12L2 6.200A11.500 11.500 0 0 1 22 6.500H12z" fill="#d93a2e" /><path d="M12 12L2 6.200A11.500 11.500 0 0 0 11 23.500l5-9z" fill="#2f9e4c" /><circle cx="12" cy="12" r="5.500" fill="#fff" /><circle cx="12" cy="12" r="4.200" fill="#3a78e0" /></symbol>
    <symbol id="record" viewBox="0 0 24 24"><circle cx="12" cy="12" r="9.800" fill="#f3e6e8" stroke="#a83848" stroke-width="3" /><circle cx="12" cy="12" r="4.500" fill="#c02c3c" /></symbol>
    <symbol id="paint" viewBox="0 0 24 24"><path d="M2 13C2 7 8 4 14 4c5 0 8 4 7 9-1 6-8 8-11 7-2-1 0-4-2-5s-6 1-6-2z" fill="#d8e4ea" stroke="#9aaebc" stroke-width=".8" /><circle cx="8" cy="10" r="1.800" fill="#7db84c" /><circle cx="13" cy="7.500" r="1.800" fill="#e8bf3c" /><circle cx="17.500" cy="15" r="1.600" fill="#4c94d0" /><path d="M21 1l2 1-8 14-3 3 1-4z" fill="#d89a50" /></symbol>
    <symbol id="globe" viewBox="0 0 24 24"><circle cx="12" cy="12" r="10.500" fill="#bcc9d4" /><path d="M1.500 12c6-4 15 5 21 1-1 5-5.500 9.500-10.500 9.500S2.500 18 1.500 12z" fill="#1f2f44" /><path d="M7 14c4 0 7 5 12 3l-3 3c-4 1-8-2-9-6z" fill="#3a78b0" /><circle cx="15" cy="7" r="3" fill="#f4f8fb" /></symbol>
    <symbol id="obs" viewBox="0 0 24 24"><circle cx="11.500" cy="11" r="10.500" fill="#15151a" stroke="#555" stroke-width=".8" /><path d="M11 4a4 4 0 0 1 3 6M5 13a4 4 0 0 1 6-3M14 17a4 4 0 0 1-3-6" fill="none" stroke="#cfcfd4" stroke-width="1.600" /><circle cx="17" cy="17" r="6.500" fill="#e8141c" /></symbol>
    <symbol id="ppt" viewBox="0 0 24 24"><circle cx="13.500" cy="12" r="10.500" fill="#d9583a" /><path d="M13.500 1.500A10.500 10.500 0 0 1 24 12H13.500z" fill="#f09478" /><path d="M0 6h12v12H0z" fill="#b83a1e" /><path d="M4.500 15.500V9H7a1.900 1.900 0 0 1 0 4H4.500" fill="none" stroke="#fff" stroke-width="1.700" /></symbol>
    <symbol id="word" viewBox="0 0 24 24"><path d="M6 1h18v22H6z" fill="#2b6fc8" /><path d="M6 1h18v6H6z" fill="#46a0ec" /><path d="M6 17h18v6H6z" fill="#153f88" /><path d="M0 6h13v12H0z" fill="#1b4fa4" /><path d="M3 9l1.500 6 2-5.500 2 5.500L10 9" fill="none" stroke="#fff" stroke-width="1.500" /></symbol>

    <symbol id="chevup" viewBox="0 0 16 16"><path d="M2 11l6-6 6 6" fill="none" stroke="#333" stroke-width="1.200" /></symbol>
    <symbol id="shield" viewBox="0 0 16 16"><path d="M8 1c2 1 4 1.300 6 1.300V9c0 3-3 5.500-6 6.500-3-1-6-3.500-6-6.500V2.300C4 2.300 6 2 8 1z" fill="#2f7fc4" stroke="#8fb8dc" /><path d="M5 8l2.300 2.300L11 6" fill="none" stroke="#fff" stroke-width="1.700" /></symbol>
    <symbol id="cup" viewBox="0 0 16 16"><path d="M3 5h8.500v9H3zM11.500 7h3v4h-3M3 3c2-2 5 1 8.500-1" fill="none" stroke="#333" /><path d="M5.500 8h4M5.500 10.500h4" stroke="#666" /></symbol>
    <symbol id="cloud" viewBox="0 0 16 16"><path d="M4 13a3 3 0 0 1 0-6c1-4 7-4 8 0a3 3 0 0 1 0 6z" fill="#e4e4e4" stroke="#4a4a4a" /><path d="M3.500 12c2-3 7-5 11-2.500" fill="none" stroke="#888" /></symbol>
    <symbol id="usb" viewBox="0 0 16 16"><path d="M4 1h7.500v10H4z" fill="#111" /><path d="M2.500 12h10.500M7.500 10.500V14.500M5 14.500h5.500" stroke="#555" /></symbol>
    <symbol id="wifi" viewBox="0 0 16 16"><g fill="none" stroke="#444" stroke-width="1.100"><path d="M1 14C1 7 7 2 14 2M4 14c0-4.500 4-8.500 10-8.500M7.500 14c0-2.500 2.500-5 6.500-5" /></g><circle cx="12" cy="13" r="1.500" fill="#222" /></symbol>
    <symbol id="volume" viewBox="0 0 16 16"><path d="M1 6h2.500L7 3v10l-3.500-3H1zM9 6c1 1 1 3 0 4M11 4.500c2 2 2 5 0 7M13 3c3 3 3 7 0 10" fill="none" stroke="#333" /></symbol>
    <symbol id="battery" viewBox="0 0 16 16"><path d="M.5 5h13v6.500H.5zM15 7v3" fill="none" stroke="#333" /><path d="M2.500 6.500h8.500v3.500H2.500z" fill="#111" /></symbol>
    <symbol id="pen" viewBox="0 0 16 16"><path d="M1 13.500c-1-3.500 6-6 4.500-2.500s-5 5-4.500 2.500M6 12l7-10 2.500 2L8.500 12.500M9 7l6 1" fill="none" stroke="#333" stroke-width="1.200" /></symbol>
  </svg>

  <div class="stage">
    <div class="app">
      <header class="titlebar">
        <svg class="i14"><use href="#logo" /></svg>
        <h1>ISE Project Navigator (P.20131013) - D:\VLSI Design Notes\alllogicgates\alllogicgates.xise - [alllogicgates (RTL1)]</h1>
        <div class="winbtns">
          <button aria-label="Minimize"><svg viewBox="0 0 10 10"><path d="M1 5.500h8" /></svg></button>
          <button aria-label="Restore"><svg viewBox="0 0 10 10"><path d="M1.500 3h6v6h-6zM3 3V1.500h5.500V8H7.500" /></svg></button>
          <button aria-label="Close"><svg viewBox="0 0 10 10"><path d="M1 1l8 8M9 1L1 9" /></svg></button>
        </div>
      </header>

      <nav class="menubar">
        <svg class="i14"><use href="#rtldoc" /></svg>
        <button v-for="m in menus" :key="m">{{ m }}</button>
        <div class="mdibtns">
          <button aria-label="Minimize document"><svg viewBox="0 0 10 10"><path d="M2.500 7.500h5" /></svg></button>
          <button aria-label="Restore document"><svg viewBox="0 0 10 10"><path d="M4 2h4.500v3.500H4zM2 4.500h4.500V8H2z" /></svg></button>
          <button aria-label="Close document"><svg viewBox="0 0 10 10"><path d="M2.500 2.500l5 5M7.500 2.500l-5 5" /></svg></button>
        </div>
      </nav>

      <div class="toolbar">
        <div v-for="(g, gi) in toolGroups" :key="gi" class="tgroup">
          <span class="grip"></span>
          <template v-for="(t, i) in g" :key="i">
            <span v-if="t === '|'" class="vsep"></span>
            <button v-else :class="['tb', { pressed: t === 'hammer' }]" :aria-label="t"><svg class="i16"><use :href="'#' + t" /></svg></button>
          </template>
        </div>
      </div>

      <main class="main">
        <aside class="dock">
          <div class="dtitle"><span>Design</span><svg class="wdock"><use href="#w-dock" /></svg></div>

          <section class="pane hier">
            <div class="side">
              <template v-for="(t, i) in designTools" :key="i">
                <span v-if="t === '|'" class="hsep"></span>
                <button v-else class="sb" :aria-label="t"><svg class="i15"><use :href="'#' + t" /></svg></button>
              </template>
            </div>
            <div class="pbody">
              <div class="viewrow">
                <span class="vlabel">View:</span>
                <label><input v-model="view" type="radio" name="view" value="implementation" /><svg class="i14"><use href="#impl" /></svg><span>Implementation</span></label>
                <label><input v-model="view" type="radio" name="view" value="simulation" /><svg class="i14"><use href="#simu" /></svg><span>Simulation</span></label>
              </div>
              <div class="box">
                <div class="boxtitle">Hierarchy</div>
                <ul class="tree">
                  <li v-for="r in hierarchy" :key="r.text">
                    <svg v-for="(c, ci) in r.line" :key="ci" class="conn"><use :href="'#c-' + c" /></svg>
                    <span class="row" :class="{ sel: r.sel }">
                      <svg class="ticon"><use :href="'#' + r.icon" /></svg>
                      <svg v-if="r.extra" class="texra"><use :href="'#' + r.extra" /></svg>
                      <span class="rtext">{{ r.text }}</span>
                    </span>
                  </li>
                </ul>
                <div class="hscroll">
                  <button class="sarrow" aria-label="Scroll left"><svg viewBox="0 0 8 8"><path d="M5.500 1L2.500 4l3 3" /></svg></button>
                  <div class="track"><div class="thumb dockthumb"><i></i></div></div>
                  <button class="sarrow" aria-label="Scroll right"><svg viewBox="0 0 8 8"><path d="M2.500 1l3 3-3 3" /></svg></button>
                </div>
              </div>
            </div>
          </section>
          <div class="hsplit"></div>

          <section class="pane procs">
            <div class="side">
              <template v-for="(t, i) in processTools" :key="i">
                <span v-if="t === '|'" class="hsep"></span>
                <button v-else class="sb" :aria-label="t"><svg class="i15"><use :href="'#' + t" /></svg></button>
              </template>
            </div>
            <div class="pbody">
              <div class="running"><svg class="i14"><use href="#cycle" /></svg><span>No Processes Running</span></div>
              <div class="box">
                <div class="boxtitle">Processes: alllogicgates - Behavioral</div>
                <ul class="tree wide">
                  <li v-for="r in processes" :key="r.text">
                    <svg v-for="(c, ci) in r.line" :key="ci" class="conn"><use :href="'#c-' + c" /></svg>
                    <span class="row" :class="{ sel: r.sel }">
                      <svg class="ticon"><use :href="'#' + r.icon" /></svg>
                      <span class="slot"><svg v-if="r.extra" class="texra"><use :href="'#' + r.extra" /></svg></span>
                      <span class="rtext">{{ r.text }}</span>
                    </span>
                  </li>
                </ul>
              </div>
            </div>
          </section>

          <div class="tabs docktabs" role="tablist">
            <button v-for="t in dockTabs" :key="t.text" role="tab" :class="{ on: t.on }"><svg class="i14"><use :href="'#' + t.icon" /></svg>{{ t.text }}</button>
          </div>
        </aside>

        <section class="work">
          <div class="workrow">
            <div class="strip">
              <template v-for="(t, i) in schematicTools" :key="i">
                <span v-if="t === '|'" class="hsep"></span>
                <button v-else :class="['sb', { pressed: t === 'nets' }]" :aria-label="t"><svg class="i15"><use :href="'#' + t" /></svg></button>
              </template>
            </div>
            <div class="canvaswrap">
              <div class="canvas">
                <svg viewBox="250 60 975 442" preserveAspectRatio="xMinYMin slice">
                  <g fill="none" stroke="#2f9c86" stroke-width="1.500">
                    <path d="M303 520V127H1211V520" />
                    <path d="M267 228.500h36M267 361.500h36" stroke="#5aa59c" />
                    <path d="M1211 228.500h14M1211 477.500h14" stroke="#39b8b4" />
                  </g>
                  <path d="M303 127h18l-18 18zM1211 127h-17l17 17z" fill="#16fbf6" />
                  <g fill="none" stroke="#8c0f16" stroke-width="1.300">
                    <path d="M686 228.500h45V520M1069 228.500h107M962 477.500h214M1113 477V520M797 460h23M797 495h23" />
                    <path d="M780 451v18l17-9zM780 486v18l17-9z" />
                  </g>
                  <g fill="none" stroke="#b0141c" stroke-width="2">
                    <path d="M340 228h132M340 361.500h417M375 228v133M757 520V228.500h98M757 460h23M757 495h23" />
                  </g>
                  <path d="M371 224.500h8v8h-8zM371 357.500h8v8h-8zM753 357.500h8v8h-8zM753 456h8v8h-8zM753 491h8v8h-8zM1109 473.500h8v8h-8z" fill="#e60a10" />
                  <g fill="none" stroke="#3f9e37" stroke-width="1.400">
                    <path d="M508.500 193h142.500v71.500H508.500zM891 193h143v71.500H891z" />
                    <path d="M651 228.500h35M1034 228.500h35M1176 228.500h35M1176 477.500h35" />
                    <path d="M855.500 520V451H903a24.500 26.500 0 0 1 0 53H855M927 477.500h35M820 459.500h35M820 495h35" stroke="#35b82f" />
                  </g>
                  <path d="M303 228.500h37M303 361.500h37M472 228.500h36M855 228.500h36" stroke="#35ee28" stroke-width="3" />
                  <g fill="#35e33a" stroke="#35e33a" stroke-width=".4" font-family="'Liberation Sans', Arial, sans-serif">
                    <g fill="#35e8d2" stroke="#35e8d2">
                      <text x="658" y="114" font-size="31">alllogicgates:1</text>
                      <g font-size="14"><text x="277" y="225">a</text><text x="276" y="358">b</text></g>
                    </g>
                    <g font-size="31">
                      <text x="483" y="180">Mxor_n00081</text><text x="483" y="297">Mxor_n00081</text>
                      <text x="879" y="180">Mxor_yxor1</text><text x="879" y="297">Mxor_yxor1</text>
                    </g>
                    <text x="860" y="436" font-size="27">and2</text>
                    <g font-size="14">
                      <text x="433" y="225">Data(1:0)</text><text x="816" y="225">Data(1:0)</text>
                      <text x="666" y="225">Result</text><text x="1050" y="225">Result</text>
                      <text x="825" y="457">I1</text><text x="825" y="492">I0</text><text x="943" y="475">O</text>
                    </g>
                  </g>
                  <path d="M654.500 301v12.500l3-2.500 2 4 2-1-2-3.800h3.500z" fill="#fff" stroke="#222" stroke-width=".5" />
                </svg>
              </div>
              <div class="vscroll">
                <button class="sarrow" aria-label="Scroll up"><svg viewBox="0 0 8 8"><path d="M1 5.500l3-3 3 3" /></svg></button>
                <div class="track"><div class="thumb"><i></i></div></div>
                <button class="sarrow" aria-label="Scroll down"><svg viewBox="0 0 8 8"><path d="M1 2.500l3 3 3-3" /></svg></button>
              </div>
              <div class="hscroll big">
                <button class="sarrow" aria-label="Scroll left"><svg viewBox="0 0 8 8"><path d="M5.500 1L2.500 4l3 3" /></svg></button>
                <div class="track"><div class="thumb"><i></i></div></div>
                <button class="sarrow" aria-label="Scroll right"><svg viewBox="0 0 8 8"><path d="M2.500 1l3 3-3 3" /></svg></button>
              </div>
              <div class="corner"></div>
            </div>
          </div>
          <div class="doctabs" role="tablist">
            <div v-for="t in docTabs" :key="t.text" :class="['doctab', { on: t.on }]">
              <svg class="i14"><use :href="'#' + t.icon" /></svg>
              <button role="tab" class="dname">{{ t.text }}</button>
              <button class="dclose" :aria-label="'Close ' + t.text"><svg viewBox="0 0 10 10"><path d="M2.500 2.500l5 5M7.500 2.500l-5 5" /></svg></button>
            </div>
          </div>
          <div class="hsplit"></div>
        </section>
      </main>

      <section class="bottom">
        <div class="dtitle"><span>View by Category</span><svg class="wdock"><use href="#w-dock" /></svg></div>
        <div class="cats">
          <div class="catleft">
            <h2>Design Objects of Top Level Block</h2>
            <div class="lists">
              <div v-for="l in objectLists" :key="l.title" class="olist">
                <div class="ohead"><span>{{ l.title }}</span><i class="tri up"></i></div>
                <div class="orow" :class="{ sel: l.sel }">
                  <svg class="conn"><use href="#c-plus" /></svg>
                  <svg class="i14"><use :href="'#' + l.icon" /></svg>
                  <span>alllogicgates</span>
                </div>
              </div>
            </div>
          </div>
          <div class="vsplit"></div>
          <div class="catright">
            <h2>Properties of Instance: alllogicgates</h2>
            <div class="props">
              <div class="ptable">
                <table>
                  <thead><tr><th>Name<i class="tri"></i></th><th>Value</th></tr></thead>
                  <tbody><tr v-for="p in properties" :key="p[0]"><td>{{ p[0] }}</td><td>{{ p[1] }}</td></tr></tbody>
                </table>
              </div>
              <div class="vscroll small">
                <button class="sarrow" aria-label="Scroll up"><svg viewBox="0 0 8 8"><path d="M1 5.500l3-3 3 3" /></svg></button>
                <div class="track"><div class="thumb"></div></div>
                <button class="sarrow" aria-label="Scroll down"><svg viewBox="0 0 8 8"><path d="M1 2.500l3 3 3-3" /></svg></button>
              </div>
            </div>
          </div>
        </div>
        <div class="tabs paneltabs" role="tablist">
          <button v-for="t in panelTabs" :key="t.text" role="tab" :class="{ on: t.on }"><svg class="i14"><use :href="'#' + t.icon" /></svg>{{ t.text }}</button>
        </div>
      </section>

      <footer class="status">[728,436]</footer>

      <div class="taskbar">
        <button class="start" aria-label="Start"><svg viewBox="0 0 14 14"><path d="M0 2l6-.8v5.400H0zM6.800 1L14 0v6.600H6.800zM0 7.400h6v5.400L0 12zM6.800 7.400H14V14l-7.200-1z" fill="#000" /></svg></button>
        <label class="search">
          <svg class="glass" viewBox="0 0 14 14"><circle cx="8.500" cy="5" r="4" fill="none" stroke="#222" stroke-width="1.100" /><path d="M5.500 8L1 13" stroke="#222" stroke-width="1.100" /></svg>
          <input v-model="query" type="text" placeholder="Type here to search" aria-label="Type here to search" />
          <svg class="birds" viewBox="0 0 54 31">
            <circle cx="22" cy="38" r="14" fill="#3d8fd6" />
            <path d="M10 31c1-4 7-7 12-7s11 3 13 7l-6-1-4-4-4 2 2 3z" fill="#7ab832" />
            <path d="M14 27l5-2 3 2-5 3-5 1z" fill="#a8d4f0" />
            <path d="M17 14l8 1 6-2 3-3 6 1 5 4 3 4-4 3-6 0-8-3-5-3z" fill="#a87860" />
            <path d="M26 11l4-5 3 3 1-6 3 3 2-6 2 5 4-3-2 8-5 6-8 1z" fill="#70483a" />
            <path d="M42 18l3 4 4 4-8-2-4-3z" fill="#8a5a44" />
            <path d="M42 22l8 3M40 23l10 3" stroke="#2a1e1a" stroke-width="1.300" />
            <path d="M16 14l4-1v2z" fill="#d89a40" />
            <g fill="#1a1a1a"><path d="M10 8l5-1-1-3 3 2 2 3-3 2z" /><path d="M0 18l4-1 1-4 2 3 3 3-5 1z" /><path d="M43 12l5 0 1-4 2 4 3 1-4 3z" /></g>
          </svg>
        </label>
        <div class="apps">
          <button v-for="a in taskApps" :key="a.n" :class="{ run: a.run, on: a.on }" :aria-label="a.n"><svg><use :href="'#' + a.n" /></svg></button>
        </div>
        <button class="weather">
          <svg viewBox="0 0 22 20"><path d="M17 4c4 4 2 14-6 14-4 0-7-2-8-4 5 2 13 0 14-10z" fill="url(#gMoon)" /><path d="M3 9a2.500 2.500 0 0 1 0-4c1-4 6-4 7-1 3 0 3 5 0 5z" fill="#eef1fb" stroke="#8f9cd8" stroke-width=".9" /><circle cx="18" cy="3" r="2.500" fill="#c02c20" /></svg>
          <span>28°C</span>
        </button>
        <div class="tray">
          <button v-for="t in trayIcons" :key="t" :aria-label="t"><svg class="i14"><use :href="'#' + t" /></svg></button>
        </div>
        <div class="stack lang"><span>ENG</span><span>IN</span></div>
        <div class="stack clock"><span>22:59</span><span>13-05-2023</span></div>
        <button class="notif" aria-label="Notifications">
          <svg viewBox="0 0 16 16"><path d="M1 1h13v10H8l-3 3v-3H1z" fill="#111" /><path d="M3 4h9M3 6.500h9M3 9h5" stroke="#e8edf3" /></svg>
          <span class="badge">2</span>
        </button>
      </div>
    </div>
  </div>
</template>

<style>
html, body { margin: 0; background: #000; }
</style>

<style scoped>
.sprite { position: absolute; width: 0; height: 0; }
.stage { box-sizing: border-box; height: 100vh; min-height: 640px; display: flex; padding: 0 40px 23px 0; background: #000; }
.app { flex: 1; min-width: 0; display: flex; flex-direction: column; background: #efefef; color: #1c1c1c; font: 9px/13px 'Noto Sans', 'Open Sans', sans-serif; }
.app * { box-sizing: border-box; }
button { font: inherit; color: inherit; background: none; border: 0; padding: 0; margin: 0; display: flex; align-items: center; justify-content: center; }
svg { display: block; flex: none; }
.i14 { width: 14px; height: 14px; }
.i15 { width: 15px; height: 15px; }
.i16 { width: 16px; height: 16px; }

.titlebar { flex: none; height: 19px; display: flex; align-items: center; gap: 2px; padding-left: 1px; background: #fff; }
.titlebar h1 { margin: 0; font-size: 9px; font-weight: 400; line-height: 13px; color: #333; flex: 1; white-space: nowrap; overflow: hidden; }
.winbtns { display: flex; padding-right: 3px; }
.winbtns button { width: 38px; height: 19px; }
.winbtns button:last-child { width: 36px; }
.winbtns svg { width: 9px; height: 9px; fill: none; stroke: #444; stroke-width: 1; }

.menubar { flex: none; height: 18px; display: flex; align-items: center; gap: 13px; border-bottom: 1px solid #bdbdbd; }
.menubar > .i14 { margin-right: -7px; }
.mdibtns { margin-left: auto; display: flex; gap: 2px; }
.mdibtns button { width: 13px; height: 14px; background: #fff; }
.mdibtns svg { width: 9px; height: 9px; fill: none; stroke: #5a6670; stroke-width: 1.500; }

.toolbar { flex: none; height: 23px; display: flex; border-bottom: 2px solid #828282; }
.tgroup { display: flex; align-items: center; padding: 0 2px 0 3px; border-right: 1px solid #b4b4b4; }
.tgroup:nth-child(2) { padding-right: 3px; }
.tgroup:last-child { border-right: 0; }
.grip { width: 2px; height: 15px; margin-right: 3px; background: repeating-linear-gradient(#aaa 0 1px, transparent 1px 3px); }
.tb { width: 18px; height: 20px; }
.tb.pressed { width: 20px; background: #b9d6f0; }
.vsep { width: 1px; height: 14px; margin: 0 3px 0 2px; background: #a8a8a8; }

.main { flex: 1; min-height: 0; display: flex; }
.dock { flex: none; width: 224px; display: flex; flex-direction: column; }
.dtitle { height: 14px; display: flex; align-items: center; justify-content: space-between; padding: 0 0 0 3px; border: 1px solid #c6c6c6; border-left: 0; font: 8px/12px 'Open Sans', 'Noto Sans', sans-serif; }
.wdock { width: 48px; height: 12px; }
.pane { display: flex; }
.hier { height: 221px; }
.procs { flex: 1; min-height: 0; }
.side { width: 21px; flex: none; display: flex; flex-direction: column; align-items: center; padding-top: 2px; border-right: 1px solid #c4c4c4; }
.sb { width: 18px; height: 18px; flex: none; }
.sb.pressed { background: #b3d3ef; }
.hsep { width: 15px; height: 1px; margin: 1px 0 2px; background: #9a9a9a; flex: none; }
.pbody { flex: 1; min-width: 0; display: flex; flex-direction: column; padding-left: 1px; }
.box { flex: 1; min-height: 0; background: #fff; border: 1px solid #8f949a; display: flex; flex-direction: column; overflow: hidden; }
.viewrow { height: 18px; display: flex; align-items: center; gap: 3px; padding-left: 3px; font: 8px/13px 'Open Sans', 'Noto Sans', sans-serif; }
.viewrow label { display: flex; align-items: center; gap: 3px; }
.viewrow input { appearance: none; width: 11px; height: 11px; margin: 0; border: 1px solid #333; border-radius: 50%; background: #fff; }
.viewrow input:checked { background: radial-gradient(circle, #222 0 3px, #fff 3px); }
.boxtitle { padding: 3px 3px 1px; line-height: 14px; }
.tree { list-style: none; margin: 0; padding: 0; }
.wide { padding-top: 1px; }
.tree li { display: flex; height: 13px; align-items: center; white-space: nowrap; }
.conn { width: 16px; height: 13px; }
.row { flex: 1; min-width: 0; height: 13px; display: flex; align-items: center; overflow: hidden; }
.row.sel, .orow.sel { background: #f1f1f1; }
.ticon { width: 14px; height: 14px; margin: 0 0 0 2px; }
.texra { width: 14px; height: 14px; }
.slot { width: 16px; height: 14px; }
.rtext { padding-left: 1px; }
.hier .rtext { padding-left: 3px; }
.hscroll { margin-top: auto; height: 13px; display: flex; background: #f1f1f1; }
.sarrow { width: 13px; flex: none; }
.sarrow svg { width: 8px; height: 8px; fill: none; stroke: #444; stroke-width: 1.600; }
.track { flex: 1; display: flex; background: #f1f1f1; }
.thumb { background: #cdcdcd; display: flex; align-items: center; justify-content: center; }
.thumb i { width: 8px; height: 8px; background: #f0f0f0; }
.dockthumb { width: 78%; }
.hsplit { height: 5px; flex: none; background: repeating-linear-gradient(90deg, #bcbcbc 0 1px, transparent 1px 3px) center / 70px 2px no-repeat; }
.work > .hsplit { background-size: 40% 2px; background-position: 37% center; }
.running { height: 21px; display: flex; align-items: center; gap: 7px; padding-left: 4px; font: 8px/13px 'Open Sans', 'Noto Sans', sans-serif; }

.tabs { display: flex; font: 8px/13px 'Open Sans', 'Noto Sans', sans-serif; }
.docktabs { height: 24px; align-items: flex-start; }
.docktabs button { height: 20px; gap: 7px; padding: 0 5px 0 4px; border-right: 1px solid #dcdcdc; }
.docktabs button:last-child { border: 0; }
.docktabs .on { background: #fff; height: 21px; padding: 0 7px 0 6px; }

.work { flex: 1; min-width: 0; display: flex; flex-direction: column; padding-left: 4px; }
.workrow { flex: 1; min-height: 0; display: flex; }
.strip { width: 21px; flex: none; display: flex; flex-direction: column; align-items: center; padding-right: 3px; }
.canvaswrap { flex: 1; min-width: 0; display: grid; grid-template: minmax(0, 1fr) 15px / minmax(0, 1fr) 15px; border-left: 1px solid #777; }
.canvas { background: #000; overflow: hidden; }
.canvas svg { width: 100%; height: 100%; }
.vscroll { display: flex; flex-direction: column; background: #f1f1f1; }
.vscroll .sarrow { width: 100%; height: 14px; }
.vscroll .track { flex-direction: column; }
.vscroll .thumb { height: 28%; margin: 4px 1px 0; }
.big { height: 15px; margin: 0; border-top: 1px solid #9a9a9a; }
.big .thumb { flex: 1; margin: 0 64px 0 16px; }
.corner { border: solid #222; border-width: 0 1px 1px 0; }
.doctabs { flex: none; height: 19px; display: flex; font: 8px/13px 'Open Sans', 'Noto Sans', sans-serif; border-top: 1px solid #b9b9b9; }
.doctab { flex: 0 1 202px; display: flex; align-items: center; padding: 0 5px 0 3px; border-right: 1px solid #aaa; border-bottom: 1px solid #c0c0c0; background: linear-gradient(#d2d2d2, #efefef 70%); }
.doctab.on { background: #f8f8f8; border-bottom: 2px solid #1f6cb4; }
.dname { flex: 1; height: 100%; }
.dclose { width: 12px; height: 12px; border-radius: 2px; background: #b4b4b4; }
.on .dclose { background: #cc5b48; }
.dclose svg { width: 9px; height: 9px; stroke: #fff; stroke-width: 2; }

.bottom { flex: none; border-top: 1px solid #bbb; }
.cats { display: flex; padding: 0 3px 3px; border-bottom: 1px solid #b4b4b4; }
.catleft, .catright { flex: 1; min-width: 0; }
.cats h2 { margin: 0; height: 16px; font-size: 8px; line-height: 13px; font-weight: 700; text-align: center; }
.lists { display: flex; gap: 5px; }
.olist { flex: 1; min-width: 0; height: 53px; background: #fff; border: 1px solid #8f949a; }
.ohead { height: 19px; display: flex; justify-content: space-between; padding: 3px 8px 0 3px; }
.orow { height: 14px; display: flex; align-items: center; white-space: nowrap; }
.orow .i14 { margin: 0 4px 0 2px; }
.tri { display: inline-block; width: 8px; height: 4px; background: #8a8a8a; clip-path: polygon(0 0, 100% 0, 50% 100%); margin-top: 2px; }
.tri.up { clip-path: polygon(50% 0, 100% 100%, 0 100%); }
.vsplit { width: 11px; background: repeating-linear-gradient(#c4c4c4 0 1px, transparent 1px 3px) center / 2px 20px no-repeat; }
.props { height: 53px; display: flex; background: #fff; border: 1px solid #8f949a; }
.ptable { flex: 1; overflow: hidden; }
.ptable table { width: 100%; border-collapse: collapse; table-layout: fixed; }
.ptable th { height: 19px; padding: 0 3px; font-weight: 400; text-align: left; }
.ptable th .tri { float: right; margin: 2px 7px 0 0; }
.ptable td { height: 13px; padding: 0 2px; line-height: 13px; }
.ptable tbody tr:nth-child(even) { background: #e6e6e6; }
.small { width: 13px; }
.small .thumb { height: 9px; margin: 0; }
.paneltabs { height: 19px; padding-left: 2px; }
.paneltabs button { height: 17px; gap: 9px; padding: 0 6px 0 3px; border-right: 1px solid #d5d5d5; }
.paneltabs .on { background: #fff; height: 19px; padding: 0 6px 0 4px; }

.status { flex: none; height: 17px; padding-right: 3px; line-height: 17px; text-align: right; }

.taskbar { flex: none; height: 32px; display: flex; align-items: stretch; background: linear-gradient(90deg, #cde8ec, #d3e3ee 55%, #d5deec); }
.start { width: 40px; }
.start svg { width: 13px; height: 13px; }
.search { flex: none; width: 231px; display: flex; align-items: center; background: #fff; padding-left: 9px; }
.glass { width: 14px; height: 14px; }
.search input { flex: 1; min-width: 0; border: 0; outline: 0; background: none; padding: 0 0 0 8px; font: 11px/16px 'Noto Sans', 'Open Sans', sans-serif; }
.search input::placeholder { color: #444; opacity: 1; }
.birds { width: 54px; height: 31px; align-self: flex-end; margin-right: 3px; }
.apps { flex: 0 1 572px; display: flex; }
.apps button { flex: 1; border: solid transparent; border-width: 0 4px 2px; background-clip: padding-box; }
.apps button:first-child { flex: 0 0 41px; }
.apps svg { width: 20px; height: 20px; }
.apps .run { border-bottom-color: #2f7cc4; }
.apps .on { background: #f0f6f7; background-clip: border-box; }
.weather { margin-left: auto; gap: 5px; font-size: 11px; padding-right: 14px; }
.weather svg { width: 20px; height: 18px; }
.tray { display: flex; }
.tray button { width: 20px; }
.stack { display: flex; flex-direction: column; justify-content: center; align-items: center; line-height: 14px; }
.lang { width: 32px; }
.clock { width: 58px; }
.notif { position: relative; width: 42px; border-right: 1px solid #b4bfcc; }
.notif svg { width: 15px; height: 15px; }
.badge { position: absolute; right: 13px; bottom: 4px; width: 12px; height: 12px; line-height: 10px; font-size: 8px; border: 1px solid #777; border-radius: 50%; background: #dfe3e8; text-align: center; }
</style>
